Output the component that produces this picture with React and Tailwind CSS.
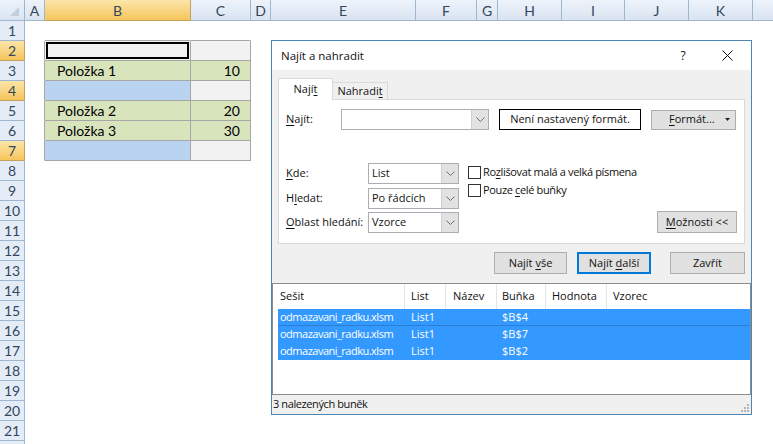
const COLS = [
  { k: "A", w: "w-[20px]" },
  { k: "B", w: "w-[146px]", sel: true },
  { k: "C", w: "w-[60px]" },
  { k: "D", w: "w-[20px]" },
  { k: "E", w: "w-[145px]" },
  { k: "F", w: "w-[61px]" },
  { k: "G", w: "w-[21px]" },
  { k: "H", w: "w-[64px]" },
  { k: "I", w: "w-[63px]" },
  { k: "J", w: "w-[64px]" },
  { k: "K", w: "w-[64px]" },
  { k: "L", w: "w-[64px]", hide: true },
];

const SEL_ROWS = [2, 4, 7];

// cell styles of the little table in B2:C7
const TABLE = {
  2: { b: "bg-[#f2f2f2]", c: "bg-[#f2f2f2]", active: true },
  3: { b: "bg-[#d8e4bc]", c: "bg-[#d8e4bc]", bt: "Položka 1", ct: "10" },
  4: { b: "bg-[#b9d3f0]", c: "bg-[#f2f2f2]" },
  5: { b: "bg-[#d8e4bc]", c: "bg-[#d8e4bc]", bt: "Položka 2", ct: "20" },
  6: { b: "bg-[#d8e4bc]", c: "bg-[#d8e4bc]", bt: "Položka 3", ct: "30" },
  7: { b: "bg-[#b9d3f0]", c: "bg-[#f2f2f2]" },
};

const hdrBlue = "bg-gradient-to-b from-[#eef3fa] to-[#d9e4f1] border-[#9eb6ce]";
const hdrSel = "bg-gradient-to-b from-[#fbe6a8] to-[#f6c55a] border-[#c2a05e]";

const Chevron = () => (
  <svg width="9" height="5" viewBox="0 0 9 5">
    <path d="M0.5 0.5 L4.5 4.5 L8.5 0.5" stroke="#6d6d6d" fill="none" />
  </svg>
);

const Combo = ({ w, text }) => (
  <div className={`${w} h-[21px] flex border border-[#abadb3] bg-white`}>
    <div className="flex-1 flex items-center pl-[3px]">{text}</div>
    <div className="w-[17px] bg-[#e2e2e2] flex items-center justify-center border-l border-[#d0d0d0]">
      <Chevron />
    </div>
  </div>
);

const Btn = ({ w, children, focus }) => (
  <div
    className={`${w} h-[22px] flex items-center justify-center bg-[#e1e1e1] ${
      focus ? "border-2 border-[#0078d7]" : "border border-[#adadad]"
    }`}
  >
    {children}
  </div>
);

const Check = ({ children }) => (
  <div className="h-[18px] flex items-center">
    <div className="w-[13px] h-[13px] border border-[#333] bg-white" />
    <span className="ml-[2px] tracking-[-0.35px]">{children}</span>
  </div>
);

const LIST_COLS = [
  { t: "Sešit", w: "w-[127px] pl-[2px]" },
  { t: "List", w: "w-[41px] pl-[6px]" },
  { t: "Název", w: "w-[51px] pl-[7px]" },
  { t: "Buňka", w: "w-[49px] pl-[5px]" },
  { t: "Hodnota", w: "w-[61px] pl-[6px]" },
  { t: "Vzorec", w: "flex-1 pl-[6px]" },
];

const RESULTS = ["$B$4", "$B$7", "$B$2"];

function Sheet() {
  const rows = Array.from({ length: 22 }, (_, i) => i + 1);
  return (
    <div className="font-['Lato',sans-serif] text-[14px]">
      <div className="flex h-[21px]">
        <div className={`w-[25px] shrink-0 border-r border-b ${hdrBlue} flex items-end justify-end`}>
          <svg width="12" height="12" viewBox="0 0 12 12" className="mb-[2px] mr-[3px]">
            <polygon points="10,1 10,10 1,10" fill="#c3cedb" />
          </svg>
        </div>
        {COLS.map((c) => (
          <div
            key={c.k}
            className={`${c.w} shrink-0 border-r border-b flex items-center justify-center text-[#34465c] ${
              c.sel ? hdrSel : hdrBlue
            }`}
          >
            {c.hide ? "" : c.k}
          </div>
        ))}
      </div>
      {rows.map((r) => {
        const t = TABLE[r];
        const sel = SEL_ROWS.includes(r);
        return (
          <div key={r} className="flex h-[20px]">
            <div
              className={`w-[25px] shrink-0 border-r border-b flex items-center justify-center text-[#34465c] ${
                sel ? hdrSel : "bg-[#e4ecf7] border-[#9eb6ce]"
              }`}
            >
              {r < 22 ? r : ""}
            </div>
            {COLS.map((c) => {
              let cls = "border-white";
              let content = null;
              if (c.k === "A" && t) cls = "border-r-[#a6a6a6] border-b-white";
              if ((c.k === "B" || c.k === "C") && r === 1) cls = "border-r-white border-b-[#a6a6a6]";
              if (c.k === "B" && t) {
                cls = `${t.b} border-[#a6a6a6]`;
                if (t.active) content = <div className="h-[17px] m-[1px] border-2 border-black" />;
                if (t.bt) content = <div className="pl-[12px] leading-[19px] text-black">{t.bt}</div>;
              }
              if (c.k === "C" && t) {
                cls = `${t.c} border-[#a6a6a6]`;
                if (t.ct) content = <div className="pr-[10px] text-right leading-[19px] text-black">{t.ct}</div>;
              }
              return (
                <div key={c.k} className={`${c.w} shrink-0 border-r border-b ${cls}`}>
                  {content}
                </div>
              );
            })}
          </div>
        );
      })}
    </div>
  );
}

function Dialog() {
  return (
    <div className="absolute left-[271px] top-[40px] w-[481px] h-[375px] border border-[#4d87b6] bg-[#f0f0f0] flex flex-col font-['Open_Sans',sans-serif] text-[11px] text-[#111]">
      <div className="h-[29px] bg-white flex items-center pl-[9px]">
        <span className="flex-1 text-[11.5px]">Najít a nahradit</span>
        <span className="w-[10px] text-center text-[12px]">?</span>
        <svg width="11" height="11" viewBox="0 0 11 11" className="ml-[34px] mr-[18px]">
          <path d="M0.5 0.5 L10.5 10.5 M10.5 0.5 L0.5 10.5" stroke="#111" />
        </svg>
      </div>

      <div className="px-[6px] pt-[8px]">
        <div className="flex items-end h-[21px]">
          <div className="w-[55px] h-[22px] -mb-px relative z-10 bg-white border border-b-0 border-[#d9d9d9] flex items-center justify-center">
            <span>
              Nají<u className="underline-offset-2">t</u>
            </span>
          </div>
          <div className="w-[55px] h-[17px] border border-l-0 border-b-0 border-[#d9d9d9] flex items-center justify-center">
            <span>
              Nahradi<u className="underline-offset-2">t</u>
            </span>
          </div>
        </div>
        <div className="h-[145px] bg-white border border-[#d9d9d9] flex flex-col">
          <div className="flex items-center mt-[9px] pl-[7px]">
            <div className="w-[55px]">
              <u className="underline-offset-2">N</u>ajít:
            </div>
            <Combo w="w-[148px]" />
            <div className="ml-[10px] w-[142px] h-[21px] border border-black flex items-center justify-center">
              Není nastavený formát.
            </div>
            <div className="ml-[10px] w-[85px] h-[20px] bg-[#e1e1e1] border border-[#adadad] flex items-center pl-[17px] pr-[5px]">
              <span className="flex-1">
                <u className="underline-offset-2">F</u>ormát...
              </span>
              <svg width="5" height="3" viewBox="0 0 5 3">
                <polygon points="0,0 5,0 2.5,3" fill="#222" />
              </svg>
            </div>
          </div>

          <div className="flex mt-[33px] pl-[7px] pr-[7px]">
            <div className="flex flex-col">
              <div className="flex items-center">
                <div className="w-[82px]">
                  <u className="underline-offset-2">K</u>de:
                </div>
                <Combo w="w-[91px]" text="List" />
              </div>
              <div className="flex items-center mt-[4px]">
                <div className="w-[82px]">
                  H<u className="underline-offset-2">l</u>edat:
                </div>
                <Combo w="w-[91px]" text="Po řádcích" />
              </div>
              <div className="flex items-center mt-[3px]">
                <div className="w-[82px]">
                  <u className="underline-offset-2">O</u>blast hledání:
                </div>
                <Combo w="w-[91px]" text="Vzorce" />
              </div>
            </div>
            <div className="ml-[9px] flex flex-col">
              <Check>
                Ro<u className="underline-offset-2">z</u>lišovat malá a velká písmena
              </Check>
              <Check>
                Pouze <u className="underline-offset-2">c</u>elé buňky
              </Check>
            </div>
            <div className="ml-auto self-end">
              <Btn w="w-[80px]">
                <span>
                  <u className="underline-offset-2">M</u>ožnosti &lt;&lt;
                </span>
              </Btn>
            </div>
          </div>
        </div>

        <div className="flex justify-end mt-[8px]">
          <Btn w="w-[73px]">
            <span>
              Najít <u className="underline-offset-2">v</u>še
            </span>
          </Btn>
          <div className="ml-[10px]">
            <Btn w="w-[74px]" focus>
              <span>
                Najít <u className="underline-offset-2">d</u>alší
              </span>
            </Btn>
          </div>
          <div className="ml-[19px]">
            <Btn w="w-[75px]">Zavřít</Btn>
          </div>
        </div>
      </div>

      <div className="mt-[9px] h-[112px] bg-white border border-[#8c8c8c] flex flex-col">
        <div className="flex h-[25px] ml-[5px] items-center">
          {LIST_COLS.map((c, i) => (
            <div
              key={c.t}
              className={`${c.w} h-full flex items-center ${i < 5 ? "border-r border-[#e5e5e5]" : ""}`}
            >
              {c.t}
            </div>
          ))}
        </div>
        {RESULTS.map((cell, i) => (
          <div
            key={cell}
            className={`flex h-[17px] ml-[5px] items-center bg-[#3399ff] text-white ${
              i === 0 ? "border-b border-[#2b7fd6]" : ""
            }`}
          >
            <div className="w-[127px] pl-[2px] tracking-[-0.5px]">odmazavani_radku.xlsm</div>
            <div className="w-[41px] pl-[6px]">List1</div>
            <div className="w-[51px]" />
            <div className="w-[49px] pl-[5px]">{cell}</div>
          </div>
        ))}
      </div>

      <div className="flex-1 flex items-center pl-[1px] relative">
        <span className="tracking-[-0.4px]">3 nalezených buněk</span>
        <svg width="9" height="9" viewBox="0 0 9 9" className="absolute right-[2px] bottom-[2px]">
          {[
            [7, 1],
            [4, 4],
            [7, 4],
            [1, 7],
            [4, 7],
            [7, 7],
          ].map(([x, y]) => (
            <rect key={`${x}-${y}`} x={x} y={y} width="2" height="2" fill="#b5b5b5" />
          ))}
        </svg>
      </div>
    </div>
  );
}

export default function App() {
  return (
    <div className="relative w-[773px] h-[444px] overflow-hidden bg-white">
      <Sheet />
      <Dialog />
    </div>
  );
}
